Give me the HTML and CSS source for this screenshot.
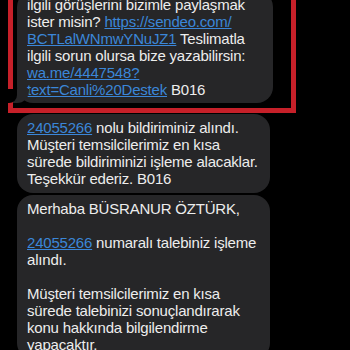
FILE: index.html
```html
<!DOCTYPE html>
<html lang="tr">
<head>
    <meta charset="UTF-8">
    <meta name="viewport" content="width=device-width, initial-scale=1.0">
    <title>Mesajlar</title>
    <link rel="stylesheet" href="styles.css">
</head>
<body>
    <div class="thread">
        <div class="highlight">
            <div class="bubble bubble-wide tail">
                ilgili görüşlerini bizimle paylaşmak ister misin? <a href="#">https://sendeo.com/<br>BCTLalWNmwYNuJZ1</a> Teslimatla ilgili sorun olursa bize yazabilirsin: <a href="#">wa.me/4447548?<br>text=Canli%20Destek</a> B016
            </div>
        </div>

        <div class="bubble">
            <a href="#">24055266</a> nolu bildiriminiz alındı. Müşteri temsilcilerimiz en kısa sürede bildiriminizi işleme alacaklar. Teşekkür ederiz. B016
        </div>

        <div class="bubble">
            <p>Merhaba BÜSRANUR ÖZTÜRK,</p>
            <p><a href="#">24055266</a> numaralı talebiniz işleme alındı.</p>
            <p>Müşteri temsilcilerimiz en kısa sürede talebinizi sonuçlandırarak konu hakkında bilgilendirme yapacaktır.</p>
        </div>
    </div>
</body>
</html>
```

FILE: styles.css
```css
body {
    margin: 0;
    padding: 0;
    background: #000;
    font-family: "Liberation Sans", Arial, sans-serif;
    overflow: hidden;
}

.thread {
    display: flex;
    flex-direction: column;
    align-items: flex-start;
    gap: 2px;
}

.highlight {
    margin: -18px 0 -1px 8px;
    width: 265px;
    border: 5px solid #c62029;
    padding: 4px 9px 5px 4px;
}

.bubble {
    position: relative;
    margin-left: 17px;
    width: 233px;
    padding: 5px 10px 6px;
    background: #262628;
    border-radius: 16px;
    color: #ededed;
    font-size: 15px;
    line-height: 17px;
    letter-spacing: -0.2px;
}

.highlight .bubble {
    margin-left: 0;
}

.bubble-wide {
    width: 236px;
    padding-bottom: 5px;
}

.bubble p {
    margin: 0 0 17px;
}

.bubble p:last-child {
    margin-bottom: 0;
}

.bubble a {
    color: #3b86d8;
    text-decoration: underline;
}

.tail::before {
    content: "";
    position: absolute;
    left: -4px;
    bottom: 0;
    width: 16px;
    height: 14px;
    background: #262628;
    border-bottom-right-radius: 12px;
}

.tail::after {
    content: "";
    position: absolute;
    left: -9px;
    bottom: 0;
    width: 9px;
    height: 14px;
    background: #000;
    border-bottom-right-radius: 8px;
}
```
